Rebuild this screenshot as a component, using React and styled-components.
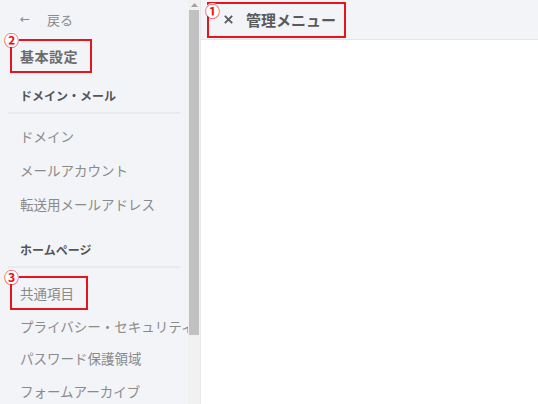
import React from "react";
import styled, { createGlobalStyle } from "styled-components";

const GlobalStyle = createGlobalStyle`
  html, body {
    margin: 0;
    padding: 0;
    background: #ffffff;
  }
  body {
    font-family: "Noto Sans CJK JP", "Noto Sans", "Liberation Sans", sans-serif;
  }
`;

const sections = [
  {
    title: "ドメイン・メール",
    gap: 7,
    row: 34,
    pad: 5,
    items: ["ドメイン", "メールアカウント", "転送用メールアドレス"],
  },
  {
    title: "ホームページ",
    gap: 13,
    row: 32.5,
    pad: 9,
    items: [
      { label: "共通項目", mark: "③" },
      "プライバシー・セキュリティ",
      "パスワード保護領域",
      "フォームアーカイブ",
    ],
  },
];

const App = () => {
  return (
    <Page>
      <GlobalStyle />
      <Sidebar>
        <SideContent>
          <BackLink>
            <Arrow>←</Arrow>
            戻る
          </BackLink>
          <Current>
            <Marked $mark="②">基本設定</Marked>
          </Current>
          {sections.map((section) => (
            <Section key={section.title} $gap={section.gap}>
              <SectionTitle>{section.title}</SectionTitle>
              <List $pad={section.pad}>
                {section.items.map((item) => {
                  const label = typeof item === "string" ? item : item.label;
                  return (
                    <Item key={label} $row={section.row}>
                      {item.mark ? (
                        <Marked $mark={item.mark} $inList>
                          {label}
                        </Marked>
                      ) : (
                        label
                      )}
                    </Item>
                  );
                })}
              </List>
            </Section>
          ))}
        </SideContent>
        <ScrollTrack>
          <ScrollButton>
            <svg width="7" height="4" viewBox="0 0 7 4">
              <path d="M0 4 L3.5 0 L7 4 Z" fill="#a0a0a0" />
            </svg>
          </ScrollButton>
          <ScrollThumb />
        </ScrollTrack>
      </Sidebar>
      <Main>
        <Header>
          <Marked $mark="①" $header>
            <CloseIcon viewBox="0 0 12 12">
              <path d="M2 2 L10 10 M10 2 L2 10" />
            </CloseIcon>
            管理メニュー
          </Marked>
        </Header>
      </Main>
    </Page>
  );
};
export default App;

export const Page = styled.div`
  display: flex;
  height: 404px;
  overflow: hidden;
`;

export const Sidebar = styled.nav`
  display: flex;
  flex: none;
  width: 201px;
  height: 100%;
  background: #f3f4f8;
  border-right: 1px solid #e9e9ec;
  box-sizing: border-box;
`;

export const SideContent = styled.div`
  width: 188px;
  flex: none;
  overflow: hidden;
`;

export const ScrollTrack = styled.div`
  display: flex;
  flex-direction: column;
  width: 12px;
  background: #f1f1f1;
`;

export const ScrollButton = styled.div`
  display: flex;
  align-items: center;
  justify-content: center;
  height: 10px;
  flex: none;
`;

export const ScrollThumb = styled.div`
  height: 325px;
  margin: 0 1px;
  background: #c1c1c1;
`;

export const BackLink = styled.div`
  display: flex;
  align-items: center;
  height: 34px;
  margin-top: 2px;
  padding-left: 20px;
  font-size: 13px;
  color: #8a8a8a;
`;

export const Arrow = styled.span`
  width: 27px;
  font-family: "DejaVu Sans", sans-serif;
  font-size: 12px;
`;

export const Current = styled.div`
  display: flex;
  align-items: center;
  height: 34px;
  margin-top: 3px;
  padding-left: 10px;
  font-size: 14px;
  letter-spacing: 0.5px;
  font-weight: 700;
  color: #6b6b6b;
`;

export const Section = styled.section`
  margin-top: ${(p) => p.$gap}px;
`;

export const SectionTitle = styled.h3`
  margin: 0 8px;
  height: 32px;
  line-height: 32px;
  padding-left: 12px;
  font-size: 12px;
  font-weight: 700;
  color: #555555;
  border-bottom: 2px solid #e9eaee;
`;

export const List = styled.ul`
  list-style: none;
  margin: 0;
  padding: ${(p) => p.$pad}px 0 0;
`;

export const Item = styled.li`
  display: flex;
  align-items: center;
  height: ${(p) => p.$row}px;
  padding-left: 20px;
  font-size: 13.5px;
  color: #8a8a8a;
  white-space: nowrap;
`;

export const Marked = styled.span`
  position: relative;
  display: inline-flex;
  align-items: center;
  gap: ${(p) => (p.$header ? "12px" : "0")};
  height: ${(p) => (p.$header ? "32px" : "30px")};
  margin-left: ${(p) => (p.$inList ? "-10px" : "0")};
  padding: ${(p) => (p.$header ? "0 8px 0 14px" : "0 12px 0 8px")};
  border: 2px solid #e8141c;

  &::before {
    content: "${(p) => p.$mark}";
    position: absolute;
    left: ${(p) => (p.$header ? "-4px" : "-8px")};
    top: ${(p) => (p.$header ? "-1px" : "-9px")};
    font-size: 15px;
    line-height: 15px;
    font-weight: 700;
    letter-spacing: 0;
    color: #e8141c;
    background: #fdfdfd;
    border-radius: 50%;
  }
`;

export const Main = styled.main`
  flex: 1;
  background: #ffffff;
`;

export const Header = styled.header`
  display: flex;
  align-items: center;
  height: 40px;
  padding-left: 6px;
  box-sizing: border-box;
  background: #f3f4f8;
  border-bottom: 1px solid #e6e7eb;
  font-size: 15px;
  font-weight: 700;
  color: #5a5a5a;
`;

export const CloseIcon = styled.svg`
  width: 11px;
  height: 11px;
  stroke: #5a5a5a;
  stroke-width: 2;
  fill: none;
`;
